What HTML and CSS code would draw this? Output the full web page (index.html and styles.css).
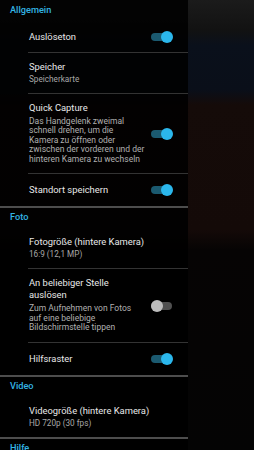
FILE: index.html
```html
<!DOCTYPE html>
<html lang="de">
  <head>
    <meta charset="UTF-8" />
    <meta name="viewport" content="width=device-width, initial-scale=1.0" />
    <title>Einstellungen</title>
    <link rel="stylesheet" href="styles.css">
  </head>
  <body>
    <div class="screen">
      <div class="settings">
        <!-- Allgemein -->
        <section class="group">
          <h2 class="group-title">Allgemein</h2>
          <div class="pref">
            <div class="pref-text"><div class="pref-title">Auslöseton</div></div>
            <span class="switch on"></span>
          </div>
          <div class="pref">
            <div class="pref-text">
              <div class="pref-title">Speicher</div>
              <div class="pref-summary">Speicherkarte</div>
            </div>
          </div>
          <div class="pref">
            <div class="pref-text">
              <div class="pref-title">Quick Capture</div>
              <div class="pref-desc">Das Handgelenk zweimal<br>schnell drehen, um die<br>Kamera zu öffnen oder<br>zwischen der vorderen und der<br>hinteren Kamera zu wechseln</div>
            </div>
            <span class="switch on"></span>
          </div>
          <div class="pref">
            <div class="pref-text"><div class="pref-title">Standort speichern</div></div>
            <span class="switch on"></span>
          </div>
        </section>

        <!-- Foto -->
        <section class="group">
          <h2 class="group-title">Foto</h2>
          <div class="pref">
            <div class="pref-text">
              <div class="pref-title">Fotogröße (hintere Kamera)</div>
              <div class="pref-summary">16:9 (12,1 MP)</div>
            </div>
          </div>
          <div class="pref">
            <div class="pref-text">
              <div class="pref-title">An beliebiger Stelle<br>auslösen</div>
              <div class="pref-desc">Zum Aufnehmen von Fotos<br>auf eine beliebige<br>Bildschirmstelle tippen</div>
            </div>
            <span class="switch"></span>
          </div>
          <div class="pref">
            <div class="pref-text"><div class="pref-title">Hilfsraster</div></div>
            <span class="switch on"></span>
          </div>
        </section>

        <!-- Video -->
        <section class="group">
          <h2 class="group-title">Video</h2>
          <div class="pref">
            <div class="pref-text">
              <div class="pref-title">Videogröße (hintere Kamera)</div>
              <div class="pref-summary">HD 720p (30 fps)</div>
            </div>
          </div>
        </section>

        <!-- Hilfe -->
        <section class="group">
          <h2 class="group-title">Hilfe</h2>
        </section>
      </div>
      <div class="preview"></div>
    </div>
  </body>
</html>
```

FILE: styles.css
```css
html,
body {
  margin: 0;
  height: 100%;
  overflow: hidden;
}

body {
  font-family: Roboto, "Noto Sans", sans-serif;
  color: #e4e4e4;
  background: linear-gradient(
    to bottom,
    #1b1b1b 0,
    #121212 30px,
    #0a101b 45px,
    #0a0f19 90px,
    #150b09 105px,
    #140a08 230px,
    #060404 250px,
    #040404 100%
  );
}

.screen {
  display: flex;
  height: 100%;
}

/* ========== Settings panel ========== */
.settings {
  width: 188px;
  flex: none;
  background-color: rgba(0, 0, 0, 0.86);
  padding-top: 1px;
}

.preview {
  flex: 1;
}

.group {
  border-bottom: 2px solid #4d4d4d;
}

.group-title {
  margin: 0;
  height: 20px;
  line-height: 18px;
  padding-left: 10px;
  font-size: 9.2px;
  font-weight: 500;
  color: #33b5e5;
}

.pref {
  display: flex;
  align-items: center;
  min-height: 32px;
  box-sizing: border-box;
  margin-left: 28px;
  padding: 8px 15px 8px 1px;
  border-bottom: 1px solid #333;
}

.pref:last-child {
  border-bottom: none;
}

.pref-text {
  flex: 1;
}

.pref-title {
  font-size: 9.4px;
  line-height: 12px;
  color: #e8e8e8;
}

.pref-summary {
  font-size: 8.2px;
  line-height: 12px;
  color: #a8a8a8;
}

.pref-desc {
  margin: 2.5px 0 1px;
  font-size: 8.5px;
  line-height: 9.6px;
  color: #b0b0b0;
}

/* ========== Switch ========== */
.switch {
  position: relative;
  flex: none;
  width: 22px;
  height: 12px;
  margin-left: 2px;
}

.switch::before {
  content: "";
  position: absolute;
  left: 0;
  top: 2px;
  width: 21px;
  height: 8px;
  border-radius: 4px;
  background-color: #505050;
}

.switch::after {
  content: "";
  position: absolute;
  left: 0;
  top: 0;
  width: 12px;
  height: 12px;
  border-radius: 50%;
  background-color: #bdbdbd;
}

.switch.on::before {
  width: 19px;
  background-color: #1b5a70;
}

.switch.on::after {
  left: 10px;
  background-color: #2bb7ec;
}
```
